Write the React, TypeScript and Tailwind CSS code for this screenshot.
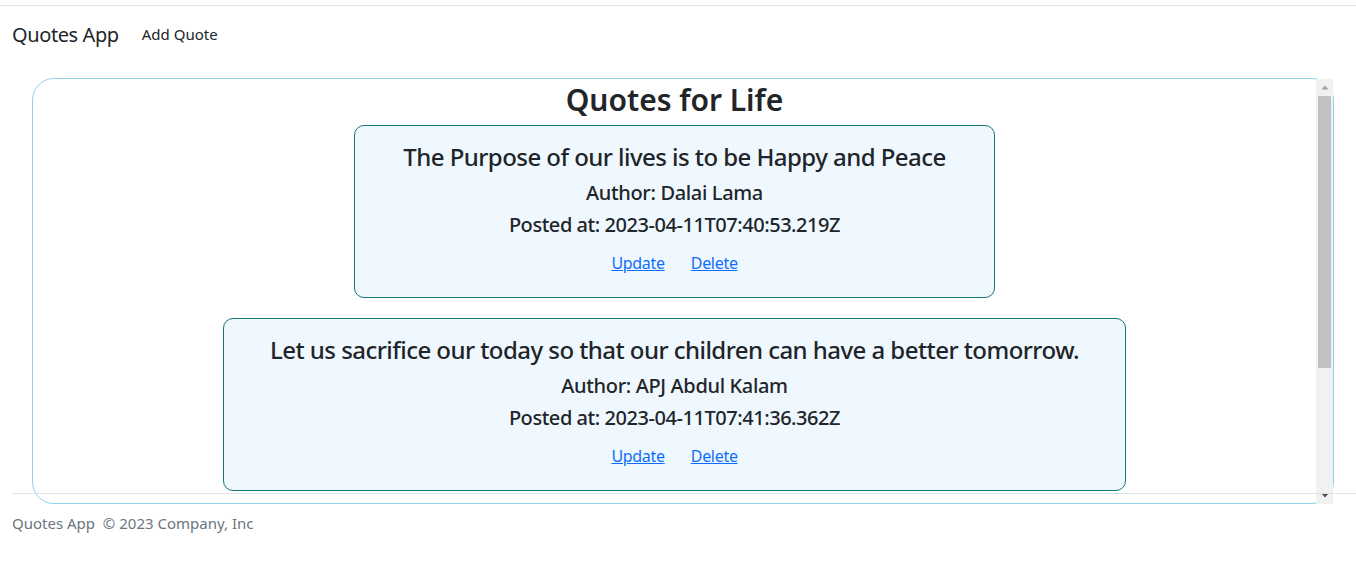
import React from "react";

interface Quote {
  text: string;
  author: string;
  postedAt: string;
  width: string;
}

const quotes: Quote[] = [
  {
    text: "The Purpose of our lives is to be Happy and Peace",
    author: "Dalai Lama",
    postedAt: "2023-04-11T07:40:53.219Z",
    width: "w-[641px]",
  },
  {
    text: "Let us sacrifice our today so that our children can have a better tomorrow.",
    author: "APJ Abdul Kalam",
    postedAt: "2023-04-11T07:41:36.362Z",
    width: "w-[903px]",
  },
];

const QuoteCard: React.FC<{ quote: Quote }> = ({ quote }) => (
  <div
    className={`${quote.width} mx-auto rounded-[10px] border border-[#137676] bg-[#f0f8ff] pt-[16px] pb-[22px] text-center whitespace-nowrap`}
  >
    <h4 className="text-[24px] leading-[29px] font-medium tracking-[-0.55px] mb-[10px]">{quote.text}</h4>
    <h5 className="text-[20px] leading-[24px] font-medium tracking-[-0.35px] mb-2">Author: {quote.author}</h5>
    <h5 className="text-[20px] leading-[24px] font-medium tracking-[-0.45px]">Posted at: {quote.postedAt}</h5>
    <div className="mt-[14px] flex justify-center gap-[26px] text-[16px] leading-[24px] tracking-[-0.3px]">
      <a href="#" className="text-[#0d6efd] underline">
        Update
      </a>
      <a href="#" className="text-[#0d6efd] underline">
        Delete
      </a>
    </div>
  </div>
);

// fake classic scrollbar (headless page hides the real one)
const ScrollBar = () => (
  <div className="w-[17px] shrink-0 flex flex-col bg-[#f1f1f1] -mb-[1px]">
    <div className="h-[17px] flex items-center justify-center">
      <svg width="8" height="5" viewBox="0 0 8 5">
        <path d="M4 0.5L7.5 4.5H0.5Z" fill="#a3a3a3" />
      </svg>
    </div>
    <div className="mx-[2px] h-[272px] bg-[#c1c1c1]" />
    <div className="flex-1" />
    <div className="h-[17px] flex items-center justify-center">
      <svg width="8" height="5" viewBox="0 0 8 5">
        <path d="M0.5 0.5H7.5L4 4.5Z" fill="#505050" />
      </svg>
    </div>
  </div>
);

export default function App() {
  return (
    <div
      className="min-h-screen bg-white text-[#212529]"
      style={{ fontFamily: '"Noto Sans", "Open Sans", sans-serif' }}
    >
      <div className="pt-[5px]">
        <div className="border-t border-[#dee2e6]" />
      </div>

      {/* Navbar */}
      <nav className="flex items-center px-[12px] h-[59px] pb-[1px]">
        <span className="text-[20px] leading-[30px] tracking-[-0.4px] mr-[23px]">Quotes App</span>
        <a href="#" className="text-[15px] leading-[24px] text-[#212529] -mt-[2px]">
          Add Quote
        </a>
      </nav>

      {/* Main */}
      <main className="h-[428px] pt-[13px]">
        <div className="ml-[32px] w-[1302px] h-[426px] flex rounded-[22px] border border-[#8dd3ec]">
          <div className="flex-1 overflow-hidden pt-[2px]">
            <h1 className="text-center text-[30px] leading-[38px] font-semibold mb-[6px]">
              Quotes for Life
            </h1>
            <div className="flex flex-col gap-[20px]">
              {quotes.map((q, i) => (
                <QuoteCard key={i} quote={q} />
              ))}
            </div>
          </div>
          <ScrollBar />
        </div>
      </main>

      {/* Footer */}
      <footer className="relative ml-[12px] border-t border-[#dee2e6] pt-[18px]">
        <p className="text-[15px] leading-[22px] text-[#6c757d]">
          Quotes App &nbsp;© 2023 Company, Inc
        </p>
      </footer>
    </div>
  );
}
